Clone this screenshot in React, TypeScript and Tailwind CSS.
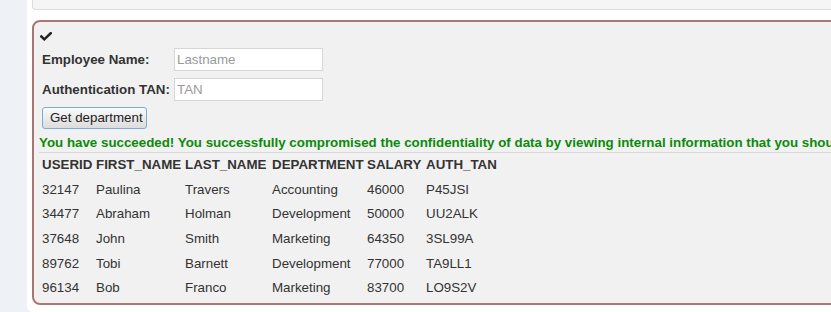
type Row = {
  userid: string;
  first: string;
  last: string;
  dept: string;
  salary: string;
  tan: string;
};

const rows: Row[] = [
  { userid: "32147", first: "Paulina", last: "Travers", dept: "Accounting", salary: "46000", tan: "P45JSI" },
  { userid: "34477", first: "Abraham", last: "Holman", dept: "Development", salary: "50000", tan: "UU2ALK" },
  { userid: "37648", first: "John", last: "Smith", dept: "Marketing", salary: "64350", tan: "3SL99A" },
  { userid: "89762", first: "Tobi", last: "Barnett", dept: "Development", salary: "77000", tan: "TA9LL1" },
  { userid: "96134", first: "Bob", last: "Franco", dept: "Marketing", salary: "83700", tan: "LO9S2V" },
];

const cols = "grid grid-cols-[54px_89px_87px_95px_59px_1fr] h-[24.6px] items-center whitespace-nowrap";

export default function App() {
  return (
    <div className="flex w-[831px] h-[312px] overflow-hidden bg-[#eef1f5] font-['Liberation_Sans',Arial,sans-serif] text-[13.33px] text-[#333]">
      <div className="w-[27px] shrink-0" />
      <div className="flex-1 bg-white pl-[5px] rounded-bl-[6px]">
        <div className="w-[900px] h-[10px] bg-[#f5f5f5] border-l border-b border-[#dcdcdc] rounded-bl-[4px]" />

        <div className="mt-[10px] w-[900px] h-[285px] border-2 border-[#a87774] rounded-[8px] bg-[#f1f1f1] pl-[5px]">
          <div className="h-[26px] pt-[10px]">
            <svg width="12" height="9" viewBox="0 0 12 9" className="ml-[1px]">
              <polyline points="1.3,4.4 4.3,7.3 10.7,1.2" fill="none" stroke="#222" strokeWidth="2.5" strokeLinecap="square" />
            </svg>
          </div>

          <div className="pl-[3px]">
            <div className="flex items-center h-[23px]">
              <label className="w-[132px] font-bold whitespace-nowrap">Employee Name:</label>
              <input
                placeholder="Lastname"
                className="w-[149px] h-[23px] bg-white border border-[#d6d6d6] px-[2px] text-[13.33px] placeholder:text-[#9a9a9a] outline-none"
              />
            </div>
            <div className="flex items-center h-[23px] mt-[7px]">
              <label className="w-[132px] font-bold whitespace-nowrap">Authentication TAN:</label>
              <input
                placeholder="TAN"
                className="w-[149px] h-[23px] bg-white border border-[#d6d6d6] px-[2px] text-[13.33px] placeholder:text-[#9a9a9a] outline-none"
              />
            </div>
            <button className="mt-[6px] w-[105px] h-[22px] border border-[#7eaad6] rounded-[3px] bg-gradient-to-b from-[#fafafa] to-[#dcdcdc] pl-[7px] text-left text-[13.33px] text-[#222] leading-[20px]">
              Get department
            </button>
          </div>

          <div className="mt-[4px] h-[19px] leading-[19px] font-bold text-[#0b8a0b] whitespace-nowrap">
            You have succeeded! You successfully compromised the confidentiality of data by viewing internal information that you should not have access to. Well done!
          </div>
          <div className="border-t border-[#dadada]" />

          <div className="pl-[3px]">
            <div className={cols + " font-bold"}>
              <span>USERID</span>
              <span>FIRST_NAME</span>
              <span>LAST_NAME</span>
              <span>DEPARTMENT</span>
              <span>SALARY</span>
              <span>AUTH_TAN</span>
            </div>
            {rows.map((r) => (
              <div key={r.userid} className={cols}>
                <span>{r.userid}</span>
                <span>{r.first}</span>
                <span>{r.last}</span>
                <span>{r.dept}</span>
                <span>{r.salary}</span>
                <span>{r.tan}</span>
              </div>
            ))}
          </div>
        </div>
      </div>
    </div>
  );
}
